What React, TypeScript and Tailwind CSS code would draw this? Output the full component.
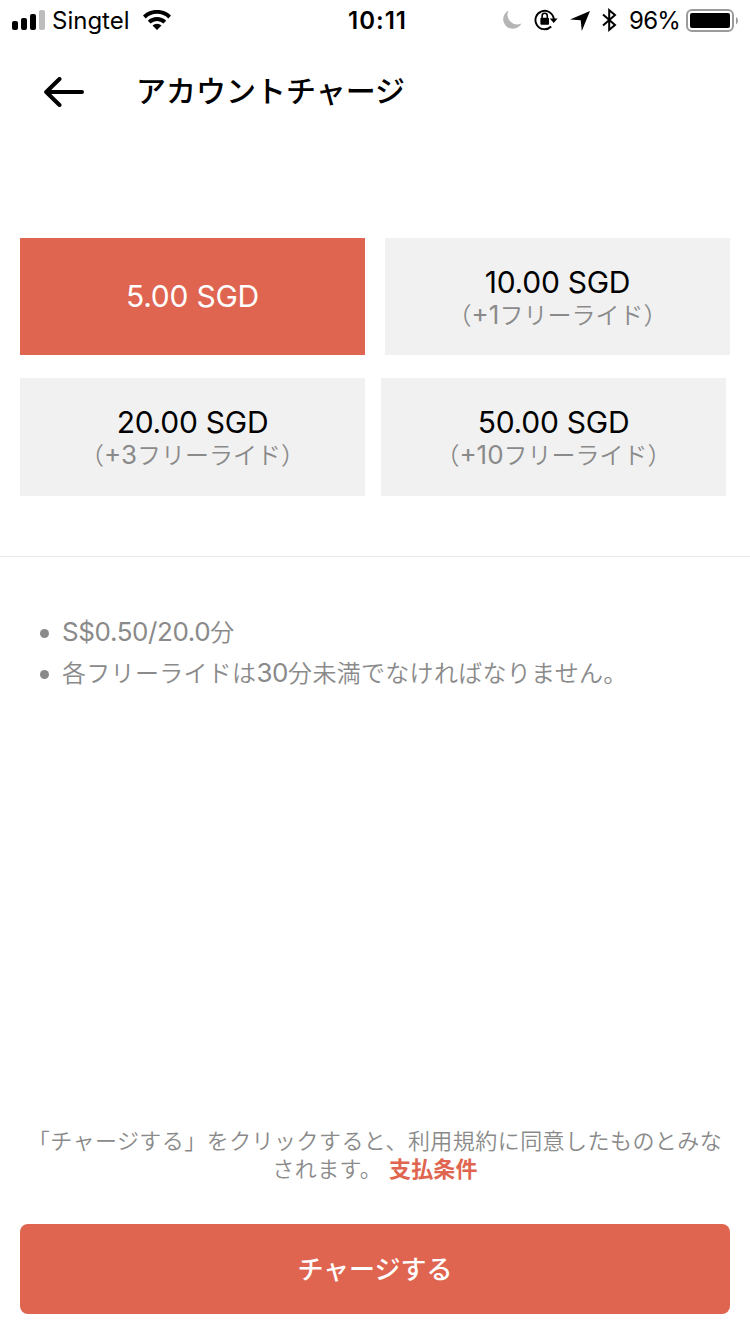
import clsx from 'clsx'

const plans = [
  { price: '5.00 SGD', bonus: '', selected: true },
  { price: '10.00 SGD', bonus: '（+1フリーライド）', selected: false },
  { price: '20.00 SGD', bonus: '（+3フリーライド）', selected: false },
  { price: '50.00 SGD', bonus: '（+10フリーライド）', selected: false },
]

const notes = ['S$0.50/20.0分', '各フリーライドは30分未満でなければなりません。']

// Latin runs are set a little larger than the kana around them
function MixedText({ text, latinClass }: { text: string; latinClass?: string }) {
  return (
    <span className="font-[350]">
      {text.split(/([\x21-\x7e]+)/).map((part, i) =>
        i % 2 === 1 ? (
          <span key={i} className={clsx('text-[26px] font-normal', latinClass)}>{part}</span>
        ) : (
          part
        ),
      )}
    </span>
  )
}

function StatusBar() {
  return (
    <div className="grid h-10 grid-cols-[1fr_auto_1fr] items-center pr-[11px] pl-3 text-2xl">
      <div className="flex items-center">
        <svg width="33" height="20" viewBox="0 0 33 20">
          <rect x="0" y="11" width="6" height="9" rx="2" />
          <rect x="9" y="8" width="6" height="12" rx="2" />
          <rect x="18" y="4" width="6" height="16" rx="2" />
          <rect x="27" y="0" width="6" height="20" rx="2" fill="#bdbdbd" />
        </svg>
        <span className="ml-[7px] pt-0.5">Singtel</span>
        <svg className="ml-[13px]" width="28" height="20" viewBox="0 0 28 20">
          <path d="M0 5.6A20 20 0 0 1 28 5.6L25.3 8.4A16.2 16.2 0 0 0 2.7 8.4Z" />
          <path d="M4.8 10.8A13.2 13.2 0 0 1 23.2 10.8L20.4 13.6A9.3 9.3 0 0 0 7.6 13.6Z" />
          <path d="M9.5 15.6A6.6 6.6 0 0 1 18.5 15.6L14 20Z" />
        </svg>
      </div>

      <span className="pt-0.5 pl-1 font-semibold tracking-[1px]">10:11</span>

      <div className="flex items-center justify-end">
        <svg width="19" height="20" viewBox="0 0 19 20" fill="#b5b5b5">
          <path d="M5.6 0.5A9.6 9.6 0 1 0 18.4 13.4A9.6 9.6 0 0 1 5.6 0.5Z" />
        </svg>
        <svg className="ml-3" width="24" height="22" viewBox="0 0 24 22">
          <path d="M17.2 17.5A9.2 9.2 0 1 1 19.8 10" fill="none" stroke="#000" strokeWidth="1.9" />
          <path d="M15.8 9.5H23.6L19.7 14.1Z" />
          <rect x="6.4" y="8.8" width="8.6" height="7" rx="1" />
          <path d="M8.1 9.5V6.9A2.6 2.6 0 0 1 13.3 6.9V9.5" fill="none" stroke="#000" strokeWidth="1.6" />
        </svg>
        <svg className="mt-px ml-3" width="20" height="20" viewBox="0 0 20 20">
          <path d="M20 0L11.8 20L10.7 9.3L0 8.4Z" />
        </svg>
        <svg className="ml-3" width="15" height="24" viewBox="0 0 15 24">
          <path d="M1 6.5L13 17L7.2 21.8V2.2L13 7L1 17.5" fill="none" stroke="#000" strokeWidth="2" />
        </svg>
        <span className="ml-3 pt-0.5 tracking-[-0.8px]">96%</span>
        <svg className="mt-px ml-1.5" width="53" height="23" viewBox="0 0 53 23">
          <rect x="1" y="1" width="46" height="21" rx="5" fill="none" stroke="#9b9b9b" strokeWidth="2" />
          <rect x="4" y="4" width="40" height="15" rx="2" />
          <path d="M50 8A4.5 4.5 0 0 1 50 15.5Z" fill="#9b9b9b" />
        </svg>
      </div>
    </div>
  )
}

function Header() {
  return (
    <header className="flex h-[104px] items-center pl-11">
      <svg width="40" height="30" viewBox="0 0 40 30" fill="none" stroke="#000" strokeWidth="4" strokeLinecap="round" strokeLinejoin="round">
        <path d="M38 15H2.2M15.5 2L2.2 15L15.5 28" />
      </svg>
      <h1 className="ml-[52px] pb-0.5 text-[30px] leading-10 font-medium">アカウントチャージ</h1>
    </header>
  )
}

export default function App() {
  return (
    <div className="flex h-[1334px] w-[750px] flex-col bg-white font-['Inter','Noto_Sans_CJK_JP',sans-serif] text-black">
      <StatusBar />
      <Header />

      <div className="mt-[94px] flex flex-col gap-[23px] px-5">
        {[plans.slice(0, 2), plans.slice(2)].map((row, i) => (
          <div key={i} className={clsx('flex', i === 0 ? 'h-[117px] gap-5' : 'h-[118px] gap-4')}>
            {row.map((plan) => (
              <button
                key={plan.price}
                className={clsx(
                  'flex w-[345px] flex-col items-center justify-center',
                  plan.selected ? 'bg-[#df6550] pb-px text-white' : 'bg-[#f1f1f1] pt-px',
                )}
              >
                <span className="text-[30px] leading-9 tracking-[-0.25px]">{plan.price}</span>
                {plan.bonus && (
                  <span className="text-2xl leading-[30px] whitespace-nowrap text-[#8a8a8a]">
                    <MixedText text={plan.bonus} />
                  </span>
                )}
              </button>
            ))}
          </div>
        ))}
      </div>

      <hr className="mt-[60px] border-[#e8e8e8]" />

      <ul className="mt-[54px] pl-10 text-2xl leading-[41px] tracking-[0.3px] text-[#8a8a8a]">
        {notes.map((note) => (
          <li key={note} className="flex h-[41px] items-center">
            <span className="mt-1 mr-[13px] size-[9px] rounded-full bg-[#8a8a8a]"></span>
            <MixedText text={note} latinClass="tracking-[-0.4px]" />
          </li>
        ))}
      </ul>

      <div className="mt-auto px-5 pb-5">
        <p className="text-center text-[22px] leading-7 font-[350] tracking-[0.45px] whitespace-nowrap text-[#8a8a8a]">
          「チャージする」をクリックすると、利用規約に同意したものとみな
          <br />
          されます。 <a href="#" className="font-bold tracking-[0.2px] text-[#df6550]">支払条件</a>
        </p>
        <button className="mt-[41px] h-[90px] w-full rounded-lg bg-[#df6550] text-[26px] font-medium text-white">
          チャージする
        </button>
      </div>
    </div>
  )
}
